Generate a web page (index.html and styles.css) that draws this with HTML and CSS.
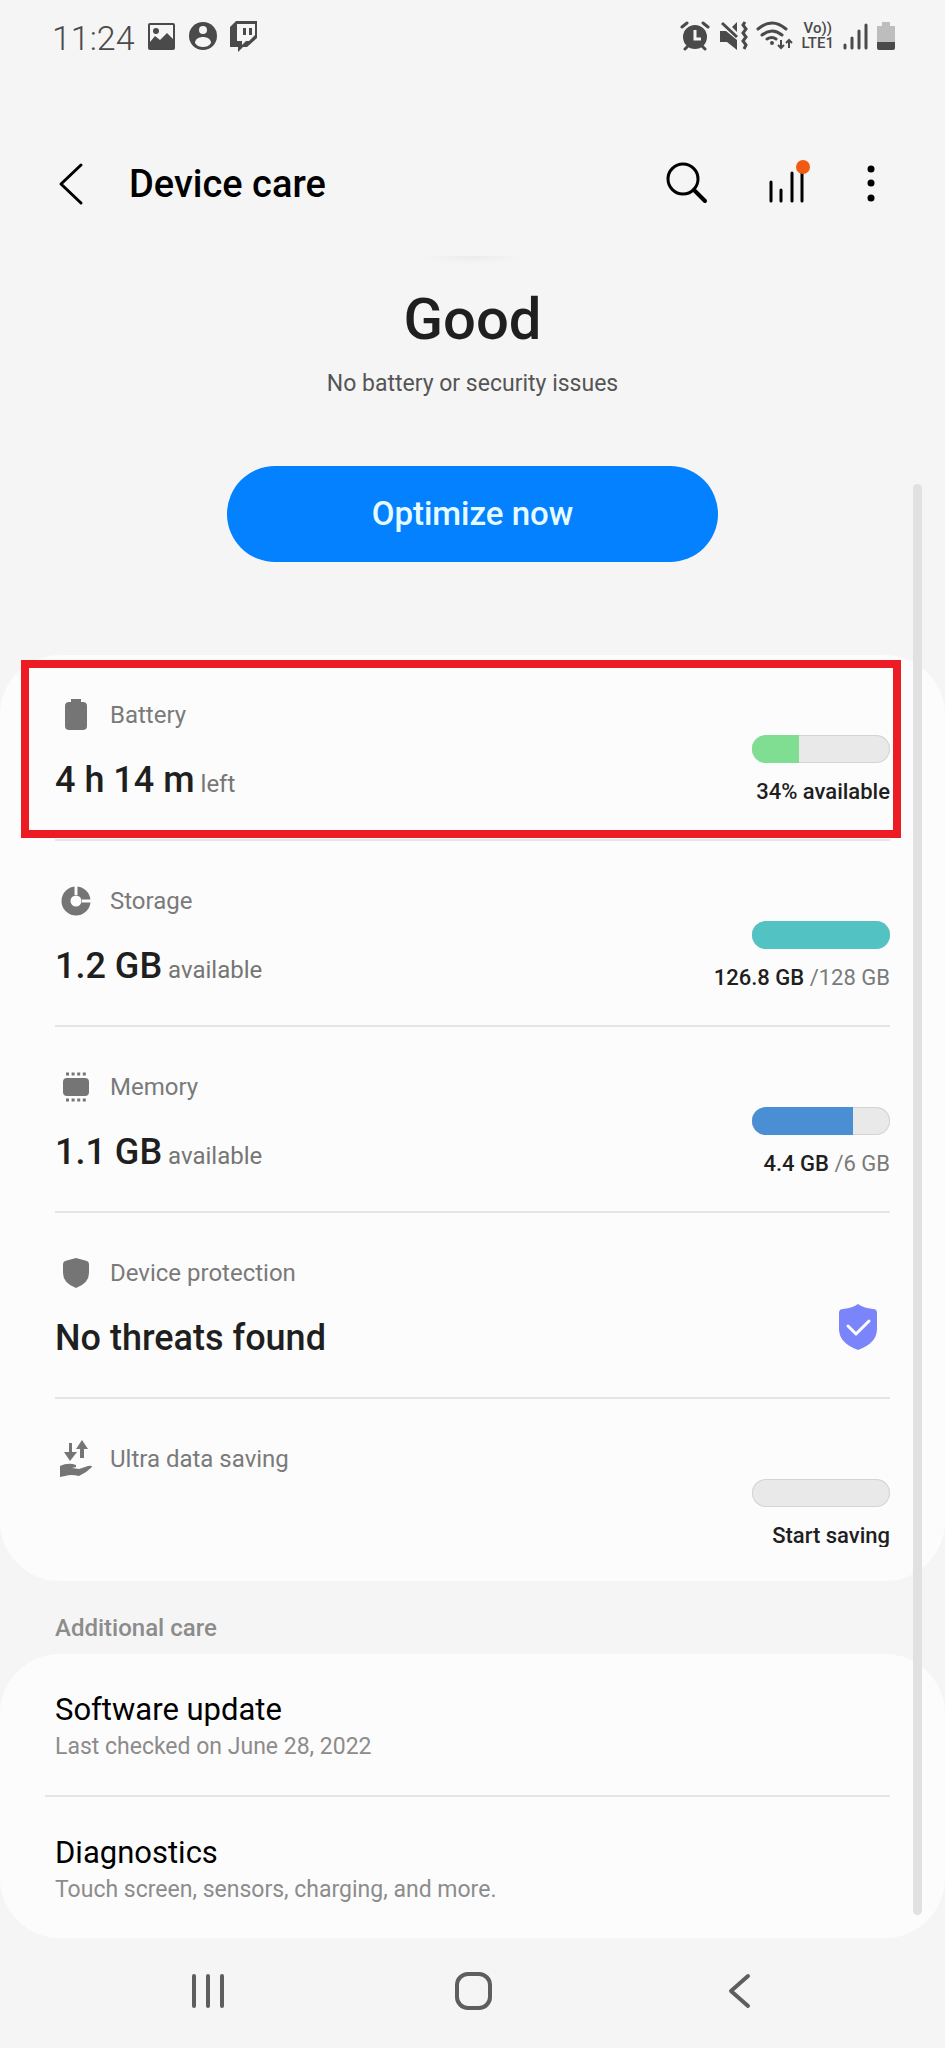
FILE: index.html
```
<!DOCTYPE html>
<html lang="en">
<head>
<meta charset="utf-8">
<meta name="viewport" content="width=device-width, initial-scale=1">
<title>Device care</title>
<link rel="stylesheet" href="styles.css">
</head>
<body>
<div class="screen">
  <div class="status">
    <span class="clock">11:24</span>
    <div class="status-left">
      <svg width="28" height="32" viewBox="0 0 28 32"><path fill="#4a4a4a" fill-rule="evenodd" d="M2 2h23a2 2 0 0 1 2 2v23a2 2 0 0 1-2 2H2a2 2 0 0 1-2-2V4a2 2 0 0 1 2-2zM2 4v17l5-6 5 4 7-7 6 6V4z"/><circle cx="8" cy="10" r="3" fill="#4a4a4a"/></svg>
      <svg width="28" height="32" viewBox="0 0 28 32"><circle cx="14" cy="15" r="14" fill="#4a4a4a"/><circle cx="14" cy="9" r="4" fill="#f5f5f5"/><path fill="#f5f5f5" d="M6 22c0-4 4-6 8-6s8 2 8 6c-2 3-5 4-8 4s-6-1-8-4z"/></svg>
      <svg width="28" height="32" viewBox="0 0 28 32"><path fill="#4a4a4a" fill-rule="evenodd" d="M6 0h21v17l-10 9h-4l-5 5v-5H0V6zM7 3v17h5v4l4-4h3l6-6V3z"/><path fill="#4a4a4a" d="M13 7h3v7h-3zM19 7h3v7h-3z"/></svg>
    </div>
    <div class="status-right">
      <svg width="30" height="30" viewBox="0 0 30 30"><circle cx="15" cy="16" r="12" fill="#4a4a4a"/><path d="M2 6l5-4M28 6l-5-4M5 28l3-3M25 28l-3-3" stroke="#4a4a4a" stroke-width="3" stroke-linecap="round"/><path d="M15 9v9h6" fill="none" stroke="#f5f5f5" stroke-width="3"/></svg>
      <svg width="30" height="30" viewBox="0 0 30 30"><path fill="#4a4a4a" d="M2 10h6l11 9v10l-10-8H2zM19 1v10l-5-5z"/><path d="M4 2l15 14" stroke="#4a4a4a" stroke-width="3"/><path d="M27 1l-2 3 3 4-3 4 3 4-3 4 3 4-2 4" fill="none" stroke="#4a4a4a" stroke-width="3"/></svg>
      <svg width="38" height="30" viewBox="0 0 38 30"><g fill="none" stroke="#4a4a4a" stroke-width="3" stroke-linecap="round"><path d="M2 8q14-12 28 0M6 14q10-8 20 0M11 18q5-3 9 0"/></g><circle cx="16" cy="22" r="2" fill="#4a4a4a"/><path d="M25 19v7m-3-2l3 3 3-3M33 27v-8m-3 3l3-3 3 3" fill="none" stroke="#4a4a4a" stroke-width="2"/></svg>
      <span class="lte"><span>Vo))</span><span>LTE1</span></span>
      <svg width="26" height="30" viewBox="0 0 26 30"><path d="M3 24v3M10 17v10M17 10v17M24 4v23" stroke="#4a4a4a" stroke-width="3" stroke-linecap="round"/></svg>
      <svg class="cell" width="20" height="30" viewBox="0 0 20 30"><path fill="#bdbdbd" d="M6 1h8v4h5v16H1V5h5z"/><path fill="#4a4a4a" d="M1 21h18v6a2 2 0 0 1-2 2H3a2 2 0 0 1-2-2z"/></svg>
    </div>
  </div>

  <header class="appbar">
    <button class="icon-btn" aria-label="Back"><svg width="30" height="48" viewBox="0 0 30 48"><path d="M25 5L5 24l20 19" fill="none" stroke="#000" stroke-width="3" stroke-linecap="round" stroke-linejoin="round"/></svg></button>
    <h1 class="title">Device care</h1>
    <button class="icon-btn" aria-label="Search"><svg width="42" height="48" viewBox="0 0 42 48"><circle cx="17" cy="19" r="15" fill="none" stroke="#000" stroke-width="3"/><path d="M28 30l11 11" stroke="#000" stroke-width="4" stroke-linecap="round"/></svg></button>
    <button class="icon-btn chart" aria-label="Usage"><svg width="44" height="48" viewBox="0 0 44 48"><path d="M4 22v19M14 30v11M25 13v28M35 10v31" stroke="#000" stroke-width="3" stroke-linecap="round"/><circle cx="36" cy="7" r="7" fill="#f05a12"/></svg></button>
    <button class="icon-btn more" aria-label="More options"><svg width="10" height="48" viewBox="0 0 10 48"><circle cx="5" cy="9" r="3.5"/><circle cx="5" cy="23" r="3.5"/><circle cx="5" cy="38" r="3.5"/></svg></button>
  </header>

  <main class="content">
    <section class="hero">
      <div class="shade"></div>
      <h2 class="verdict">Good</h2>
      <p class="note">No battery or security issues</p>
      <button class="optimize">Optimize now</button>
    </section>

    <section class="card">
      <article class="row marked">
        <div class="info">
          <div class="label"><svg width="32" height="32" viewBox="0 0 32 32"><path fill="#757575" d="M11 0h10v3h2a4 4 0 0 1 4 4v20a4 4 0 0 1-4 4H9a4 4 0 0 1-4-4V7a4 4 0 0 1 4-4h2z"/></svg>Battery</div>
          <div class="value">4 h 14 m <small>left</small></div>
        </div>
        <div class="gauge"><div class="bar"><div class="fill green" style="width:34%"></div></div><div class="caption">34% available</div></div>
      </article>
      <article class="row">
        <div class="info">
          <div class="label"><svg width="32" height="32" viewBox="0 0 32 32"><circle cx="16" cy="16" r="10" fill="none" stroke="#757575" stroke-width="9"/><path d="M16 0v10M22 16h10" stroke="#fcfcfc" stroke-width="3"/></svg>Storage</div>
          <div class="value">1.2 GB <small>available</small></div>
        </div>
        <div class="gauge"><div class="bar"><div class="fill teal" style="width:100%"></div></div><div class="caption">126.8 GB <span>/128 GB</span></div></div>
      </article>
      <article class="row">
        <div class="info">
          <div class="label"><svg width="32" height="32" viewBox="0 0 32 32"><rect x="3" y="7" width="26" height="18" rx="4" fill="#757575"/><path d="M6 3h20M6 29h20" stroke="#757575" stroke-width="3" stroke-dasharray="3 2.6"/></svg>Memory</div>
          <div class="value">1.1 GB <small>available</small></div>
        </div>
        <div class="gauge"><div class="bar"><div class="fill blue" style="width:73%"></div></div><div class="caption">4.4 GB <span>/6 GB</span></div></div>
      </article>
      <article class="row">
        <div class="info">
          <div class="label"><svg width="32" height="32" viewBox="0 0 32 32"><path fill="#757575" d="M16 1l11 3q2 1 2 3v9q0 10-13 15Q3 26 3 16V7q0-2 2-3z"/></svg>Device protection</div>
          <div class="value">No threats found</div>
        </div>
        <svg class="shield" width="40" height="48" viewBox="0 0 40 48"><path fill="#7b85fb" d="M20 1q5 4 15 5 4 0 4 4v16q0 14-19 21Q1 40 1 26V10q0-4 4-4 10-1 15-5z"/><path d="M10 23l8 8 13-13" fill="none" stroke="#fff" stroke-width="3" stroke-linecap="round" stroke-linejoin="round"/></svg>
      </article>
      <article class="row">
        <div class="info">
          <div class="label"><svg width="32" height="38" viewBox="0 0 32 38"><path fill="#757575" d="M9 3h3v9h5l-7 9-6-9h5zM22 0l6 9h-4v9h-4V9h-4zM0 26q8-4 16-1v2l-4 1 7 1 9-3q4-1 4 1-6 6-13 9-8-2-14 0l-5 1z"/></svg>Ultra data saving</div>
        </div>
        <div class="gauge"><div class="bar"></div><div class="caption clipped">Start saving</div></div>
      </article>
    </section>

    <h3 class="heading">Additional care</h3>
    <section class="card">
      <a class="item" href="#update"><span class="name">Software update</span><span class="detail">Last checked on June 28, 2022</span></a>
      <a class="item" href="#diagnostics"><span class="name">Diagnostics</span><span class="detail">Touch screen, sensors, charging, and more.</span></a>
    </section>
    <div class="scrollbar"></div>
  </main>

  <nav class="nav">
    <button class="icon-btn" aria-label="Recent apps"><svg width="40" height="40" viewBox="0 0 40 40"><path d="M6 5v30M20 5v30M34 5v30" stroke="#5e5e5e" stroke-width="4" stroke-linecap="round"/></svg></button>
    <button class="icon-btn" aria-label="Home"><svg width="40" height="40" viewBox="0 0 40 40"><rect x="4" y="3" width="33" height="34" rx="11" fill="none" stroke="#5e5e5e" stroke-width="4"/></svg></button>
    <button class="icon-btn" aria-label="Go back"><svg width="40" height="40" viewBox="0 0 40 40"><path d="M29 5L12 20l17 15" fill="none" stroke="#5e5e5e" stroke-width="4" stroke-linecap="round" stroke-linejoin="round"/></svg></button>
  </nav>
</div>
</body>
</html>
```
FILE: styles.css
```
* { box-sizing: border-box; }
body {
  margin: 0;
  background: #f5f5f5;
  color: #1f1f1f;
  font-family: Roboto, "Noto Sans", sans-serif;
}
h1, h2, h3, p { margin: 0; }
svg { display: block; flex: none; }
.screen { display: flex; flex-direction: column; min-height: 100vh; }

.status {
  display: flex;
  align-items: center;
  height: 72px;
  padding: 0 49px 0 52px;
  color: #4a4a4a;
}
.clock { font-size: 34px; font-weight: 300; line-height: 40px; margin-right: 13px; padding-top: 3px; }
.status-left { display: flex; gap: 13px; padding-top: 2px; }
.status-right { display: flex; align-items: center; gap: 8px; margin-left: auto; }
.lte { display: flex; flex-direction: column; align-items: center; font-size: 15px; line-height: 15px; font-weight: 500; }

.icon-btn { display: flex; justify-content: center; padding: 0; border: 0; background: none; color: inherit; }
.appbar {
  display: flex;
  align-items: center;
  height: 184px;
  padding: 60px 69px 20px 56px;
}
.title { flex: 1; margin-left: 43px; font-size: 38px; line-height: 48px; font-weight: 500; color: #000; }
.chart { margin-left: 59px; }
.more { margin-left: 55px; }

.content { position: relative; flex: 1; }
.hero { display: flex; flex-direction: column; align-items: center; height: 399px; }
.shade { width: 100px; height: 8px; background: radial-gradient(ellipse at top, #ebebeb, #f5f5f5 70%); }
.verdict { margin-top: 20px; font-size: 58px; line-height: 70px; font-weight: 500; }
.note { margin-top: 14px; font-size: 23px; line-height: 32px; color: #555; font-weight: 400; }
.optimize {
  width: 52%;
  height: 96px;
  margin-top: 66px;
  border: 0;
  border-radius: 48px;
  background: #0381fe;
  color: #e6fbff;
  font: 500 33px/40px Roboto, "Noto Sans", sans-serif;
}

.card { padding: 0 55px; border-radius: 60px; background: #fcfcfc; }
.row {
  position: relative;
  display: flex;
  align-items: flex-start;
  justify-content: space-between;
  min-height: 186px;
  padding: 44px 0 31px;
  border-bottom: 2px solid #e6e6e6;
}
.row:last-child { min-height: 182px; border-bottom: 0; }
.marked::after {
  content: "";
  position: absolute;
  inset: 5px -11px 1px -34px;
  border: 8px solid #ed1c24;
}
.label {
  display: flex;
  align-items: center;
  gap: 18px;
  height: 32px;
  padding-left: 5px;
  color: #7a7a7a;
  font-size: 24px;
  line-height: 32px;
}
.value { margin-top: 26px; font-size: 36px; line-height: 46px; font-weight: 500; white-space: nowrap; }
.value small { margin-left: -3px; font-size: 24px; font-weight: 400; color: #757575; }
.gauge { display: flex; flex-direction: column; align-items: flex-end; gap: 13px; padding-top: 36px; }
.bar { width: 138px; height: 28px; overflow: hidden; border-radius: 14px; background: #e9e9e9; box-shadow: inset 0 0 0 1px #d4d4d4; }
.fill { height: 100%; }
.green { background: #80de92; }
.teal { background: #53c2c3; }
.blue { background: #4a8fd3; }
.caption { font-size: 22px; line-height: 32px; font-weight: 500; white-space: nowrap; }
.caption span { font-weight: 400; color: #7a7a7a; }
.clipped { height: 27px; overflow: hidden; }
.shield { margin: 46px 12px 0 0; }

.heading { padding: 31px 55px 10px; font-size: 24px; line-height: 32px; font-weight: 500; color: #8c8c8c; }
.item {
  position: relative;
  display: flex;
  flex-direction: column;
  padding: 36px 0 31px;
  color: inherit;
  text-decoration: none;
}
.item + .item { border-top: 2px solid #e6e6e6; margin-left: -10px; padding-left: 10px; }
.name { font-size: 31px; line-height: 40px; color: #000; }
.detail { font-size: 23px; line-height: 34px; color: #8c8c8c; }
.scrollbar { position: absolute; top: 228px; right: 23px; bottom: 23px; width: 9px; border-radius: 5px; background: #e1e1e1; }

.nav { display: flex; justify-content: space-around; align-items: center; height: 110px; padding: 0 73px 4px 75px; }
```
